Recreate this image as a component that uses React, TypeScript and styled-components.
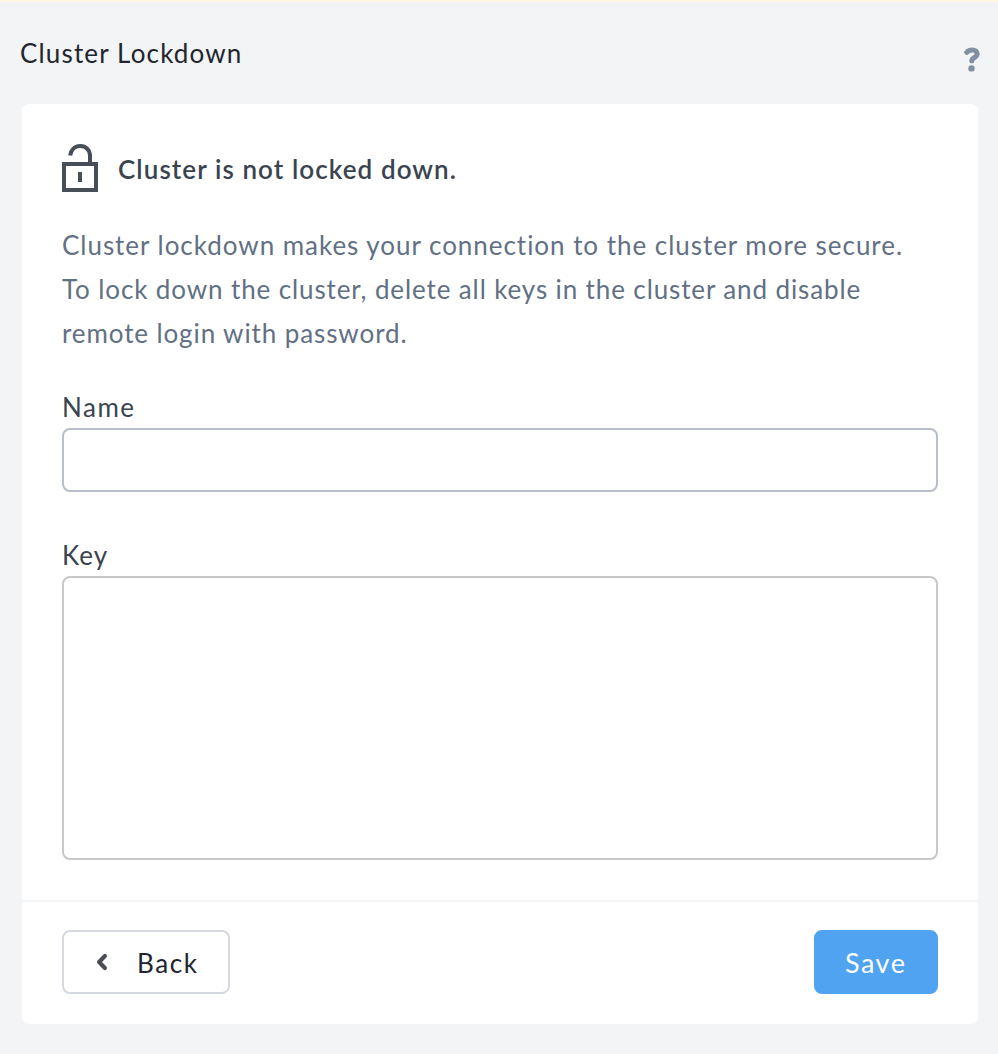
import React from "react";
import styled, { createGlobalStyle } from "styled-components";

const GlobalStyle = createGlobalStyle`
  * { box-sizing: border-box; }
  body { margin: 0; background: #f2f4f6; }
  body, button, input, textarea { font-family: Lato, "Liberation Sans", sans-serif; }
`;

const Page = styled.main`
  height: 1054px;
  padding: 0 20px 0 22px;
  border-top: 2px solid #fff6e4;
  background: #f2f4f6;
  font-size: 26px;
`;

const Header = styled.header`
  display: flex;
  justify-content: space-between;
  height: 102px;
  padding-top: 34px;
`;

const Title = styled.h1`
  margin: 0 0 0 -2px;
  font-size: 26px;
  line-height: 34px;
  font-weight: 400;
  letter-spacing: 1.16px;
  color: #22252f;
`;

const HelpIcon = styled.svg`
  display: block;
  width: 18px;
  height: 26px;
  margin: 11px -3px 0 0;
`;

const Card = styled.section`
  border-radius: 6px;
  background: #fff;
`;

const CardBody = styled.div`
  height: 796px;
  padding: 40px 40px 0;
`;

const Status = styled.div`
  display: flex;
  height: 48px;
`;

const LockIcon = styled.svg`
  width: 36px;
  height: 48px;
  flex: none;
`;

const StatusText = styled.h2`
  margin: 8px 0 0 20px;
  font-size: 26px;
  line-height: 34px;
  font-weight: 600;
  letter-spacing: 1.08px;
  color: #3a444e;
  white-space: nowrap;
`;

const Description = styled.p`
  margin: 31px 0 0;
  line-height: 44px;
  color: #627084;
`;

const Line = styled.span<{ $spacing: number }>`
  display: block;
  white-space: nowrap;
  letter-spacing: ${(p) => p.$spacing}px;
`;

const Field = styled.label<{ $gap: number }>`
  display: block;
  margin-top: ${(p) => p.$gap}px;
`;

const FieldLabel = styled.span<{ $spacing: number }>`
  display: block;
  height: 38px;
  line-height: 34px;
  letter-spacing: ${(p) => p.$spacing}px;
  color: #3a444e;
`;

const TextInput = styled.input`
  display: block;
  width: 100%;
  height: 64px;
  padding: 0 18px;
  border: 2px solid #b8bfca;
  border-radius: 8px;
  outline: none;
  font-size: 26px;
`;

const TextArea = styled.textarea`
  display: block;
  width: 100%;
  height: 284px;
  padding: 14px 18px;
  border: 2px solid #c8c8c8;
  border-radius: 8px;
  outline: none;
  resize: none;
  font-size: 26px;
`;

const Footer = styled.footer`
  display: flex;
  justify-content: space-between;
  height: 124px;
  padding: 28px 40px 0;
  border-top: 2px solid #f2f4f6;
`;

const Button = styled.button<{ $primary?: boolean }>`
  display: flex;
  align-items: center;
  width: ${(p) => (p.$primary ? 124 : 168)}px;
  height: 64px;
  padding: ${(p) => (p.$primary ? "0 0 0 29px" : "0 0 0 32px")};
  border: 2px solid ${(p) => (p.$primary ? "#4fa3f1" : "#d5d9df")};
  border-radius: 8px;
  background: ${(p) => (p.$primary ? "#4fa3f1" : "#fff")};
  color: ${(p) => (p.$primary ? "#fff" : "#22252f")};
  font-size: ${(p) => (p.$primary ? 27 : 26)}px;
  line-height: 34px;
`;

const ButtonLabel = styled.span<{ $spacing: number }>`
  padding-top: 2px;
  letter-spacing: ${(p) => p.$spacing}px;
`;

const BackIcon = styled.svg`
  flex: none;
  width: 12px;
  height: 18px;
  margin-right: 29px;
`;

export default function App() {
  return (
    <>
      <GlobalStyle />
      <Page>
        <Header>
          <Title>Cluster Lockdown</Title>
          <HelpIcon viewBox="0 0 18 26" role="img" aria-label="Help">
            <path
              d="M3.7 5.4C5.2 3.7 7 3 9.2 3c3 0 4.9 1.6 4.9 3.9 0 3.6-5.3 3.8-5.3 6.8"
              fill="none"
              stroke="#8390a3"
              strokeWidth="5.1"
              strokeLinecap="round"
              strokeLinejoin="round"
            />
            <circle cx="8.5" cy="21.4" r="3.2" fill="#8390a3" />
          </HelpIcon>
        </Header>
        <Card>
          <CardBody>
            <Status>
              <LockIcon viewBox="0 0 36 48" fill="none" stroke="#464e58" strokeWidth="4">
                <rect x="2" y="20" width="32" height="26" />
                <path d="M8.2 11.6C9 5.6 13 2 18.2 2 24.2 2 28 6.2 28 12v7" />
                <path d="M18 28v10" />
              </LockIcon>
              <StatusText>Cluster is not locked down.</StatusText>
            </Status>
            <Description>
              <Line $spacing={0.965}>Cluster lockdown makes your connection to the cluster more secure.</Line>
              <Line $spacing={0.885}>To lock down the cluster, delete all keys in the cluster and disable</Line>
              <Line $spacing={0.9}>remote login with password.</Line>
            </Description>
            <Field $gap={35}>
              <FieldLabel $spacing={1.5}>Name</FieldLabel>
              <TextInput type="text" />
            </Field>
            <Field $gap={46}>
              <FieldLabel $spacing={1.1}>Key</FieldLabel>
              <TextArea />
            </Field>
          </CardBody>
          <Footer>
            <Button type="button">
              <BackIcon viewBox="0 0 12 18">
                <path
                  d="M8.9 3 3.1 9l5.8 6"
                  fill="none"
                  stroke="#4b4e55"
                  strokeWidth="4.2"
                  strokeLinecap="round"
                  strokeLinejoin="round"
                />
              </BackIcon>
              <ButtonLabel $spacing={1.6}>Back</ButtonLabel>
            </Button>
            <Button type="button" $primary>
              <ButtonLabel $spacing={1.5}>Save</ButtonLabel>
            </Button>
          </Footer>
        </Card>
      </Page>
    </>
  );
}
